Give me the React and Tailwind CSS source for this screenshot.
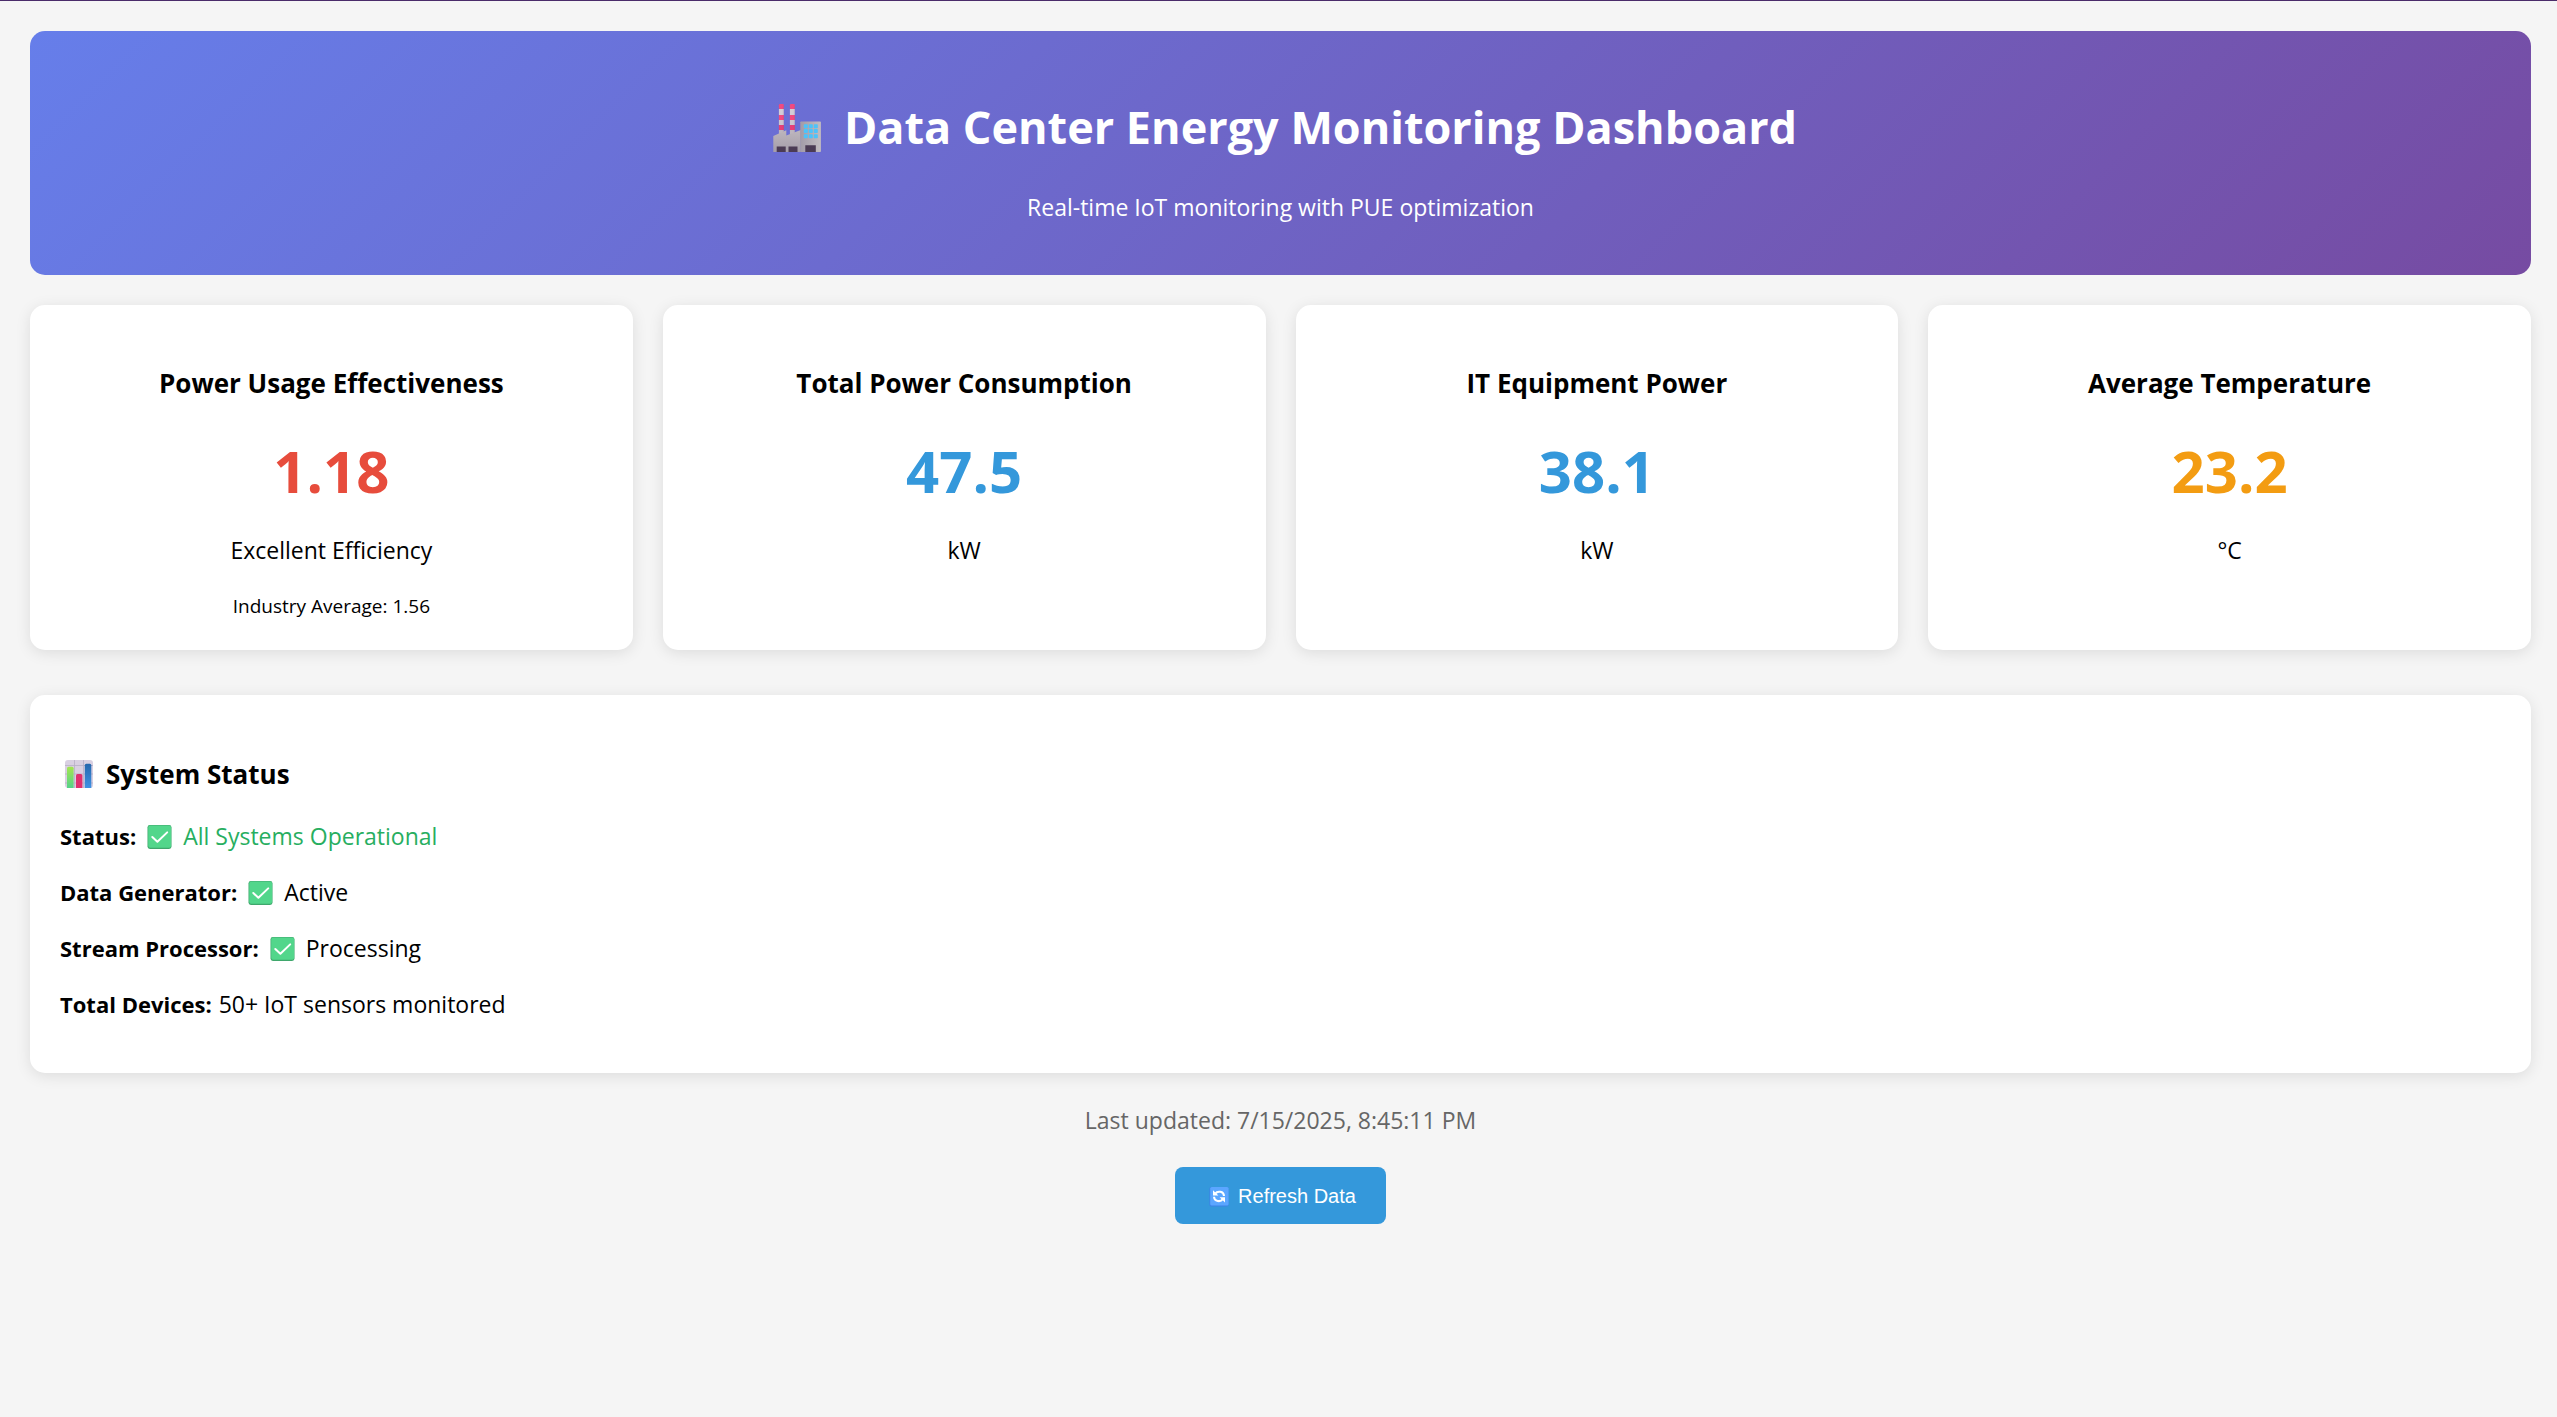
import React from 'react';

function FactoryIcon() {
  const stripes = [
    [11, 5, '#f04a80'],
    [16, 6, '#d2cdd6'],
    [22, 5, '#f04a80'],
    [27, 5, '#cbc5cf'],
    [32, 5, '#e53f78'],
    [37, 4, '#bdb5bf'],
  ];
  const windows = [31.2, 36.1, 41.2];
  return (
    <svg aria-hidden="true" className="h-16 w-[66px] shrink-0" viewBox="0 2 66 64">
      <defs>
        <linearGradient id="wall" x1="0" y1="0" x2="0" y2="1">
          <stop offset="0" stopColor="#bdb6bd" />
          <stop offset="1" stopColor="#a59da9" />
        </linearGradient>
        <linearGradient id="tower" x1="0" y1="0" x2="1" y2="0">
          <stop offset="0" stopColor="#a29ba8" />
          <stop offset="1" stopColor="#c2bcc0" />
        </linearGradient>
      </defs>
      {[14.9, 25.9].map((x) => (
        <g key={x}>
          {stripes.map(([y, h, c]) => (
            <rect key={y} x={x} y={y} width="5" height={h} rx={y === 11 ? 1.2 : 0} fill={c} />
          ))}
          <rect x={x + 4} y="12" width="1" height="29" fill="#7c5c9c" opacity="0.2" />
        </g>
      ))}
      <path d="M9.3 43 22.3 37.2V42.5L36.7 37V59H9.3z" fill="url(#wall)" />
      <rect x="36.3" y="28.4" width="20.6" height="30.6" rx="0.8" fill="url(#tower)" />
      {windows.map((y) =>
        [39.8, 44.8, 49.8].map((x) => (
          <rect key={x + '-' + y} x={x} y={y} width="4" height="4" rx="0.8" fill="#4cc3fa" />
        )),
      )}
      <path d="M12.7 53.4h9V59h-9zM24.5 53.4h9V59h-9zM41.3 52.2h10.5V59H41.3z" fill="#4b3b54" />
    </svg>
  );
}

function ChartIcon() {
  return (
    <svg aria-hidden="true" className="h-[38px] w-[38px] shrink-0" viewBox="0 2 38 38">
      <defs>
        <linearGradient id="green" x1="0" y1="0" x2="0" y2="1">
          <stop offset="0" stopColor="#a4e64f" />
          <stop offset="1" stopColor="#55d28a" />
        </linearGradient>
        <linearGradient id="blue" x1="0" y1="0" x2="0" y2="1">
          <stop offset="0" stopColor="#2567ad" />
          <stop offset="1" stopColor="#3f92e4" />
        </linearGradient>
      </defs>
      <rect x="5" y="7" width="28" height="28" rx="3" fill="#d9d0e2" />
      <path d="M5 12.5h28M5 21h28M5 30h28M14.5 7v28M23.5 7v28" stroke="#b9aec6" strokeWidth="0.8" />
      <path d="M7 35V15.2q0-1.5 1.5-1.5h3.6q1.5 0 1.5 1.5V35z" fill="url(#green)" />
      <path d="M16 35V22.5q0-1.5 1.5-1.5h3.4q1.5 0 1.5 1.5V35z" fill="#e0306f" />
      <path d="M24.8 35V12.2q0-1.5 1.5-1.5h3.5q1.5 0 1.5 1.5V35z" fill="url(#blue)" />
    </svg>
  );
}

function CheckIcon() {
  return (
    <svg aria-hidden="true" className="h-8 w-[33px] shrink-0" viewBox="0 1 33 32">
      <rect x="4.5" y="6" width="24" height="24" rx="2.4" fill="#3fa76c" />
      <rect x="5.2" y="6.4" width="22.9" height="22.4" rx="2" fill="#52d68b" />
      <path d="M9.3 18 14.4 22.8 24.2 13.4" fill="none" stroke="#fff" strokeWidth="2" strokeLinecap="round" strokeLinejoin="round" />
    </svg>
  );
}

function RefreshIcon() {
  return (
    <svg aria-hidden="true" className="h-[27px] w-[29px] shrink-0" viewBox="0 1 29 27">
      <rect x="4.4" y="5" width="19.2" height="19.6" rx="1.8" fill="#3c82e6" />
      <rect x="5.2" y="5" width="18.4" height="18.6" rx="1.6" fill="#5ba6ff" />
      <path d="M10.2 11.6C12.4 8.6 18.8 9 19 14" fill="none" stroke="#fff" strokeWidth="2" />
      <path d="M9 14.8C9.2 19.8 15.6 20.2 17.8 17.2" fill="none" stroke="#fff" strokeWidth="2" />
      <path d="M8 8.2V13.6H13.4zM20 20.6V15.2H14.6z" fill="#fff" />
    </svg>
  );
}

const metrics = [
  { title: 'Power Usage Effectiveness', value: '1.18', unit: 'Excellent Efficiency', note: 'Industry Average: 1.56', color: 'text-[#e74c3c]' },
  { title: 'Total Power Consumption', value: '47.5', unit: 'kW', color: 'text-[#3498db]' },
  { title: 'IT Equipment Power', value: '38.1', unit: 'kW', color: 'text-[#3498db]' },
  { title: 'Average Temperature', value: '23.2', unit: '°C', color: 'text-[#f39c12]' },
];

const statuses = [
  { label: 'Status:', text: 'All Systems Operational', check: true, color: 'text-[#27ae60]' },
  { label: 'Data Generator:', text: 'Active', check: true, color: 'text-black' },
  { label: 'Stream Processor:', text: 'Processing', check: true, color: 'text-black' },
  { label: 'Total Devices:', text: '50+ IoT sensors monitored', check: false, color: 'text-black' },
];

const card = 'rounded-[15px] bg-white px-[30px] pt-[60px] pb-7 shadow-[0_3px_15px_rgba(0,0,0,0.1)]';

export default function App() {
  return (
    <div className="min-h-screen border-t border-[#4a2c6a] bg-[#f5f5f5] pt-[30px] pr-[26px] pb-[30px] pl-[30px] font-['Open_Sans',sans-serif] text-[23px] leading-8 text-black">
      <header className="rounded-[15px] bg-[linear-gradient(135deg,#667eea_0%,#764ba2_100%)] px-[30px] pt-16 pb-[52px] text-center text-white">
        <h1 className="flex items-center justify-center gap-3.5 text-[45px] leading-[64px] font-bold">
          <FactoryIcon />
          Data Center Energy Monitoring Dashboard
        </h1>
        <p className="mt-8">Real-time IoT monitoring with PUE optimization</p>
      </header>

      <main>
        <section className="mt-[30px] grid grid-cols-4 gap-[30px] text-center">
          {metrics.map((m) => (
            <article key={m.title} className={card}>
              <h3 className="text-[26px] leading-[37px] font-bold">{m.title}</h3>
              <div className={`mt-7 text-[58px] leading-[82px] font-bold ${m.color}`}>{m.value}</div>
              <p className="mt-[22px]">{m.unit}</p>
              {m.note && <p className="mt-6 text-[19px]">{m.note}</p>}
            </article>
          ))}
        </section>

        <section className={`mt-[45px] ${card}`}>
          <h3 className="flex items-center gap-2 text-[26px] leading-[38px] font-bold">
            <ChartIcon />
            System Status
          </h3>
          <div className="mt-[27px] mb-[25px] flex flex-col gap-6">
            {statuses.map((s) => (
              <p key={s.label} className="flex items-center gap-[7px]">
                <strong className="text-[22px] font-bold">{s.label}</strong>
                {s.check && <CheckIcon />}
                <span className={s.color}>{s.text}</span>
              </p>
            ))}
          </div>
        </section>
      </main>

      <footer className="mt-[31px] flex flex-col items-center gap-[31px]">
        <p className="text-[#666666]">Last updated: 7/15/2025, 8:45:11 PM</p>
        <button type="button" className="flex cursor-pointer items-center gap-1 rounded-lg bg-[#3498db] px-[30px] pt-4 pb-3.5 font-['Liberation_Sans',Arial,sans-serif] text-xl leading-[27px] text-white">
          <RefreshIcon />
          Refresh Data
        </button>
      </footer>
    </div>
  );
}
